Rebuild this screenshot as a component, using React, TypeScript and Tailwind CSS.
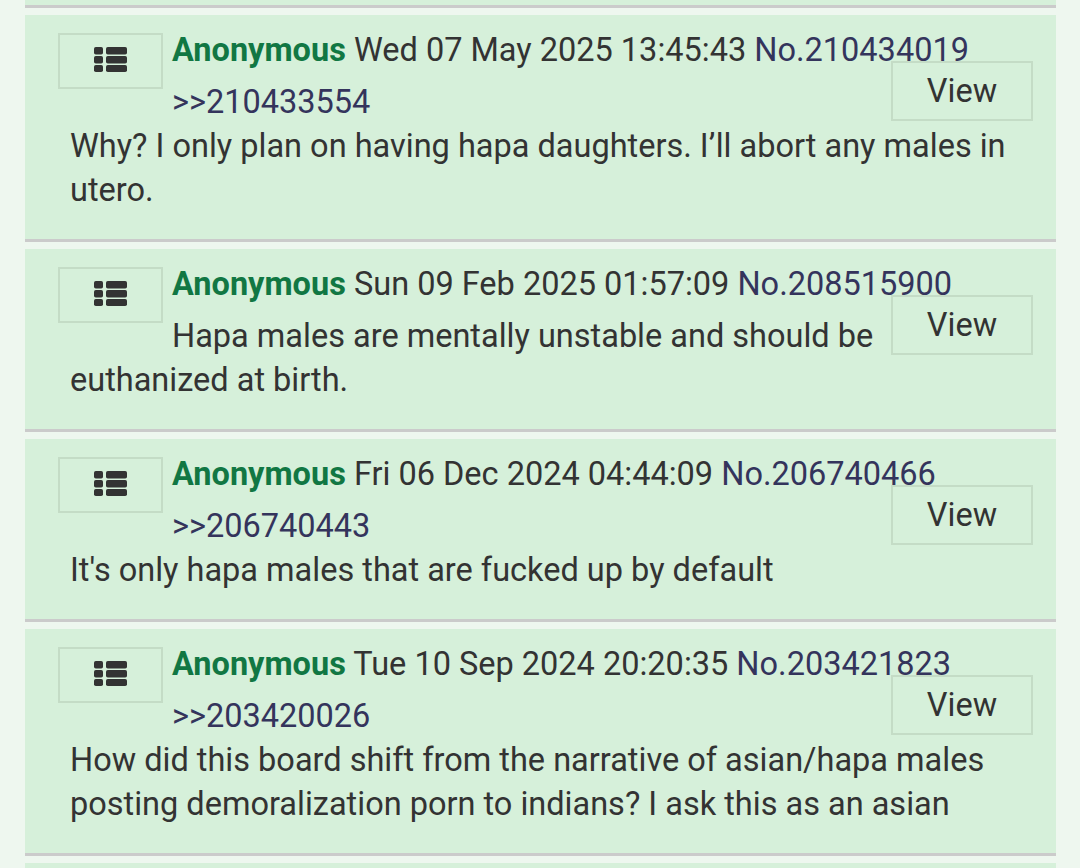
import React from "react";

type Post = {
  date: string;
  no: string;
  quote?: string;
  body: string;
};

const posts: Post[] = [
  {
    date: "Wed 07 May 2025 13:45:43",
    no: "210434019",
    quote: "210433554",
    body: "Why? I only plan on having hapa daughters. I\u2019ll abort any males in utero.",
  },
  {
    date: "Sun 09 Feb 2025 01:57:09",
    no: "208515900",
    body: "Hapa males are mentally unstable and should be euthanized at birth.",
  },
  {
    date: "Fri 06 Dec 2024 04:44:09",
    no: "206740466",
    quote: "206740443",
    body: "It's only hapa males that are fucked up by default",
  },
  {
    date: "Tue 10 Sep 2024 20:20:35",
    no: "203421823",
    quote: "203420026",
    body: "How did this board shift from the narrative of asian/hapa males posting demoralization porn to indians? I ask this as an asian",
  },
];

function ListIcon() {
  return (
    <svg width="33" height="25" viewBox="0 0 33 25" fill="#333333">
      <rect x="0" y="0" width="9" height="7.5" rx="1.8" />
      <rect x="12" y="0" width="21" height="7.5" rx="1.8" />
      <rect x="0" y="9" width="9" height="7.5" rx="1.8" />
      <rect x="12" y="9" width="21" height="7.5" rx="1.8" />
      <rect x="0" y="18" width="9" height="7" rx="1.8" />
      <rect x="12" y="18" width="21" height="7" rx="1.8" />
    </svg>
  );
}

function PostCard({ p }: { p: Post }) {
  return (
    <div className="flow-root bg-[#d6f0da] border-b-[3px] border-[#cbcbcb] pl-[45px] pr-[23px] pt-[13px] pb-[27px] text-[32.5px] text-[#333333]">
      <div className="float-left ml-[-12px] mt-[5px] mr-[9px] w-[105px] h-[56px] border-2 border-[#c4dcc6] flex items-center justify-center pb-[4px]">
        <ListIcon />
      </div>
      <div className="leading-[45px] whitespace-nowrap">
        <span className="font-bold text-[#117743]">Anonymous</span>{" "}
        <span>{p.date}</span>{" "}
        <span className="text-[#34345c]">No.{p.no}</span>
      </div>
      <div className="float-right mt-[-12px] w-[142px] h-[60px] border-2 border-[#c4dcc6] flex items-center justify-center">
        View
      </div>
      <div className="leading-[44px] mt-[7px]">
        {p.quote && (
          <>
            <span className="text-[#34345c]">&gt;&gt;{p.quote}</span>
            <br />
          </>
        )}
        {p.body}
      </div>
    </div>
  );
}

export default function App() {
  return (
    <div
      className="w-[1080px] h-[868px] overflow-hidden bg-[#eef7ef] pl-[25px] pr-[24px]"
      style={{ fontFamily: "Roboto, 'Noto Sans', sans-serif" }}
    >
      <div className="flex flex-col gap-[7px] mt-[-1px]">
        <div className="h-[9px] bg-[#d6f0da] border-b-[3px] border-[#cbcbcb]" />
        {posts.map((p) => (
          <PostCard key={p.no} p={p} />
        ))}
        <div className="h-[40px] bg-[#d6f0da]" />
      </div>
    </div>
  );
}
